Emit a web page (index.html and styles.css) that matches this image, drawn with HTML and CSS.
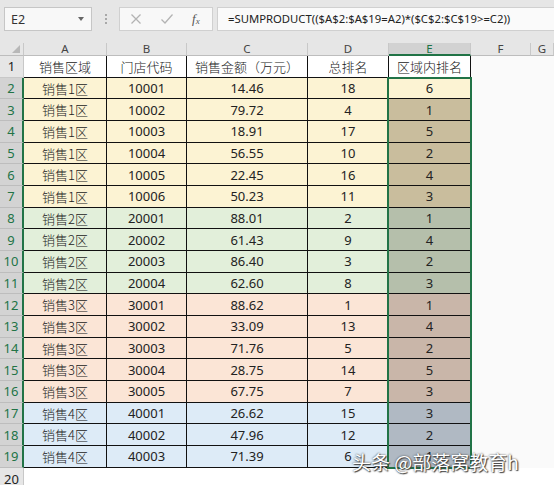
FILE: index.html
```html
<!DOCTYPE html>
<html>
<head>
<meta charset="utf-8">
<link rel="stylesheet" href="styles.css">
</head>
<body>
<div class="top">
  <div class="namebox"><span>E2</span><span class="caret"></span></div>
  <div class="dots"><i></i><i></i><i></i></div>
  <div class="fxbox">
    <svg class="ico" width="12" height="12" viewBox="0 0 12 12"><path d="M1.5 1.5L10.5 10.5M10.5 1.5L1.5 10.5" stroke="#b3b3b3" stroke-width="1.3" fill="none"/></svg>
    <svg class="ico" width="14" height="12" viewBox="0 0 14 12"><path d="M1.5 6.5L5 10L12.5 1.5" stroke="#b3b3b3" stroke-width="1.3" fill="none"/></svg>
    <span class="fx">f<sub>x</sub></span>
  </div>
  <div class="formula">=SUMPRODUCT(($A$2:$A$19=A2)*($C$2:$C$19&gt;=C2))</div>
</div>
<div class="sheet">
  <div class="row hdr">
    <div class="corner"><span class="tri"></span></div>
    <div class="ch">A</div><div class="ch">B</div><div class="ch">C</div><div class="ch">D</div><div class="ch sel">E</div><div class="ch">F</div><div class="ch">G</div>
  </div>
  <div class="row head">
    <div class="rh">1</div><div class="c">销售区域</div><div class="c">门店代码</div><div class="c">销售金额（万元）</div><div class="c">总排名</div><div class="c">区域内排名</div><div class="e"></div><div class="e"></div>
  </div>
  <div class="row y"><div class="rh s">2</div><div class="c">销售1区</div><div class="c">10001</div><div class="c">14.46</div><div class="c">18</div><div class="c act">6</div><div class="e"></div><div class="e"></div></div>
  <div class="row y"><div class="rh s">3</div><div class="c">销售1区</div><div class="c">10002</div><div class="c">79.72</div><div class="c">4</div><div class="c k">1</div><div class="e"></div><div class="e"></div></div>
  <div class="row y"><div class="rh s">4</div><div class="c">销售1区</div><div class="c">10003</div><div class="c">18.91</div><div class="c">17</div><div class="c k">5</div><div class="e"></div><div class="e"></div></div>
  <div class="row y"><div class="rh s">5</div><div class="c">销售1区</div><div class="c">10004</div><div class="c">56.55</div><div class="c">10</div><div class="c k">2</div><div class="e"></div><div class="e"></div></div>
  <div class="row y"><div class="rh s">6</div><div class="c">销售1区</div><div class="c">10005</div><div class="c">22.45</div><div class="c">16</div><div class="c k">4</div><div class="e"></div><div class="e"></div></div>
  <div class="row y"><div class="rh s">7</div><div class="c">销售1区</div><div class="c">10006</div><div class="c">50.23</div><div class="c">11</div><div class="c k">3</div><div class="e"></div><div class="e"></div></div>
  <div class="row g"><div class="rh s">8</div><div class="c">销售2区</div><div class="c">20001</div><div class="c">88.01</div><div class="c">2</div><div class="c k">1</div><div class="e"></div><div class="e"></div></div>
  <div class="row g"><div class="rh s">9</div><div class="c">销售2区</div><div class="c">20002</div><div class="c">61.43</div><div class="c">9</div><div class="c k">4</div><div class="e"></div><div class="e"></div></div>
  <div class="row g"><div class="rh s">10</div><div class="c">销售2区</div><div class="c">20003</div><div class="c">86.40</div><div class="c">3</div><div class="c k">2</div><div class="e"></div><div class="e"></div></div>
  <div class="row g"><div class="rh s">11</div><div class="c">销售2区</div><div class="c">20004</div><div class="c">62.60</div><div class="c">8</div><div class="c k">3</div><div class="e"></div><div class="e"></div></div>
  <div class="row o"><div class="rh s">12</div><div class="c">销售3区</div><div class="c">30001</div><div class="c">88.62</div><div class="c">1</div><div class="c k">1</div><div class="e"></div><div class="e"></div></div>
  <div class="row o"><div class="rh s">13</div><div class="c">销售3区</div><div class="c">30002</div><div class="c">33.09</div><div class="c">13</div><div class="c k">4</div><div class="e"></div><div class="e"></div></div>
  <div class="row o"><div class="rh s">14</div><div class="c">销售3区</div><div class="c">30003</div><div class="c">71.76</div><div class="c">5</div><div class="c k">2</div><div class="e"></div><div class="e"></div></div>
  <div class="row o"><div class="rh s">15</div><div class="c">销售3区</div><div class="c">30004</div><div class="c">28.75</div><div class="c">14</div><div class="c k">5</div><div class="e"></div><div class="e"></div></div>
  <div class="row o"><div class="rh s">16</div><div class="c">销售3区</div><div class="c">30005</div><div class="c">67.75</div><div class="c">7</div><div class="c k">3</div><div class="e"></div><div class="e"></div></div>
  <div class="row b"><div class="rh s">17</div><div class="c">销售4区</div><div class="c">40001</div><div class="c">26.62</div><div class="c">15</div><div class="c k">3</div><div class="e"></div><div class="e"></div></div>
  <div class="row b"><div class="rh s">18</div><div class="c">销售4区</div><div class="c">40002</div><div class="c">47.96</div><div class="c">12</div><div class="c k">2</div><div class="e"></div><div class="e"></div></div>
  <div class="row b"><div class="rh s">19</div><div class="c">销售4区</div><div class="c">40003</div><div class="c">71.39</div><div class="c">6</div><div class="c k">1</div><div class="e"></div><div class="e"></div></div>
  <div class="row last"><div class="rh">20</div><div class="e"></div><div class="e"></div><div class="e"></div><div class="e"></div><div class="e"></div><div class="e"></div><div class="e"></div></div>
  <div class="selbox"></div>
</div>
<div class="watermark">头条 @部落窝教育h</div>
</body>
</html>
```
FILE: styles.css
```css
html, body {
  margin: 0;
  padding: 0;
}
body {
  width: 554px;
  height: 485px;
  overflow: hidden;
  background: #fafafa;
  font-family: "Noto Sans", "Noto Sans CJK SC", sans-serif;
  color: #222;
  position: relative;
}
.top {
  height: 43px;
  box-sizing: border-box;
  background: #e6e6e6;
  display: flex;
  align-items: flex-start;
  padding-top: 7px;
}
.namebox {
  margin-left: 4px;
  width: 88px;
  height: 24px;
  box-sizing: border-box;
  border: 1px solid #c6c6c6;
  background: #f8f8f8;
  display: flex;
  align-items: center;
  justify-content: space-between;
  padding: 0 7px 0 6px;
  font-size: 12.5px;
  color: #333;
}
.caret {
  width: 0;
  height: 0;
  border-left: 3.5px solid transparent;
  border-right: 3.5px solid transparent;
  border-top: 4px solid #666;
}
.dots {
  width: 27px;
  height: 24px;
  display: flex;
  flex-direction: column;
  align-items: center;
  justify-content: center;
  gap: 2px;
}
.dots i {
  display: block;
  width: 2px;
  height: 2px;
  background: #a8a8a8;
}
.fxbox {
  width: 94px;
  height: 24px;
  box-sizing: border-box;
  border: 1px solid #d0d0d0;
  background: #f8f8f8;
  display: flex;
  align-items: center;
  padding-left: 10px;
  gap: 18px;
}
.fx {
  font-family: "Liberation Serif", serif;
  font-style: italic;
  font-size: 13px;
  color: #555;
}
.fx sub {
  font-size: 9px;
  vertical-align: -1px;
}
.formula {
  margin-left: 4px;
  flex: 1;
  height: 24px;
  box-sizing: border-box;
  border: 1px solid #d0d0d0;
  border-right: none;
  background: #fafafa;
  font-size: 11.3px;
  line-height: 22px;
  padding-left: 10px;
  color: #222;
  white-space: nowrap;
}
.sheet {
  position: relative;
  display: grid;
  grid-template-columns: 24px 83px 80px 121px 81px 82px 60px 1fr;
  grid-template-rows: 13px repeat(19, 21.68px) 1fr;
  height: 442px;
}
.row {
  display: contents;
}
.corner, .ch {
  background: #e6e6e6;
  border-right: 1px solid #c8c8c8;
  border-bottom: 1px solid #bdbdbd;
  box-sizing: border-box;
}
.corner {
  position: relative;
}
.tri {
  position: absolute;
  right: 3px;
  bottom: 2px;
  width: 0;
  height: 0;
  border-left: 8px solid transparent;
  border-bottom: 8px solid #b8b8b8;
}
.ch {
  font-size: 11.5px;
  line-height: 12px;
  text-align: center;
  color: #444;
}
.ch.sel {
  background: #d2d2d2;
  color: #217346;
  border-bottom: 2px solid #217346;
}
.rh {
  background: #e6e6e6;
  border-right: 1px solid #c8c8c8;
  border-bottom: 1px solid #c8c8c8;
  box-sizing: border-box;
  font-size: 13px;
  display: flex;
  align-items: center;
  justify-content: center;
  color: #222;
}
.rh.s {
  background: #d3d3d3;
  color: #217346;
  border-right: 2px solid #217346;
  border-bottom-color: #bdbdbd;
}
.c {
  border-right: 1px solid #111;
  border-bottom: 1px solid #111;
  box-sizing: border-box;
  display: flex;
  align-items: center;
  justify-content: center;
  font-size: 13px;
  color: #222;
  white-space: nowrap;
}
.head .c {
  background: #ffffff;
  font-family: "Noto Sans CJK SC", sans-serif;
  font-weight: 300;
}
.row .c:nth-child(2) {
  font-family: "Noto Sans CJK SC", sans-serif;
  font-weight: 300;
}
.y .c { background: #fcf3d3; }
.g .c { background: #e2efda; }
.o .c { background: #fbe5d6; }
.b .c { background: #ddebf7; }
.y .c.k { background: #c9bd9d; }
.g .c.k { background: #b5bfab; }
.o .c.k { background: #c9b6a9; }
.b .c.k { background: #b0b9c3; }
.y .c.act { background: #fcf3d3; }
.e {
  background: #fafafa;
}
.last .rh {
  align-items: flex-start;
  padding-top: 2px;
  border-bottom: none;
}
.last .e {
  background: #ffffff;
}
.selbox {
  position: absolute;
  grid-column: 6 / 7;
  grid-row: 3 / 21;
  top: -1px;
  bottom: -1px;
  left: -2px;
  right: -1px;
  border: 2px solid #217346;
  pointer-events: none;
  z-index: 2;
}
.watermark {
  position: absolute;
  left: 352px;
  top: 448px;
  font-family: "Noto Sans CJK SC", sans-serif;
  font-size: 19px;
  color: #ffffff;
  text-shadow: 0 0 2px #333, 1px 1px 1px #444;
  white-space: nowrap;
  z-index: 5;
}
```
